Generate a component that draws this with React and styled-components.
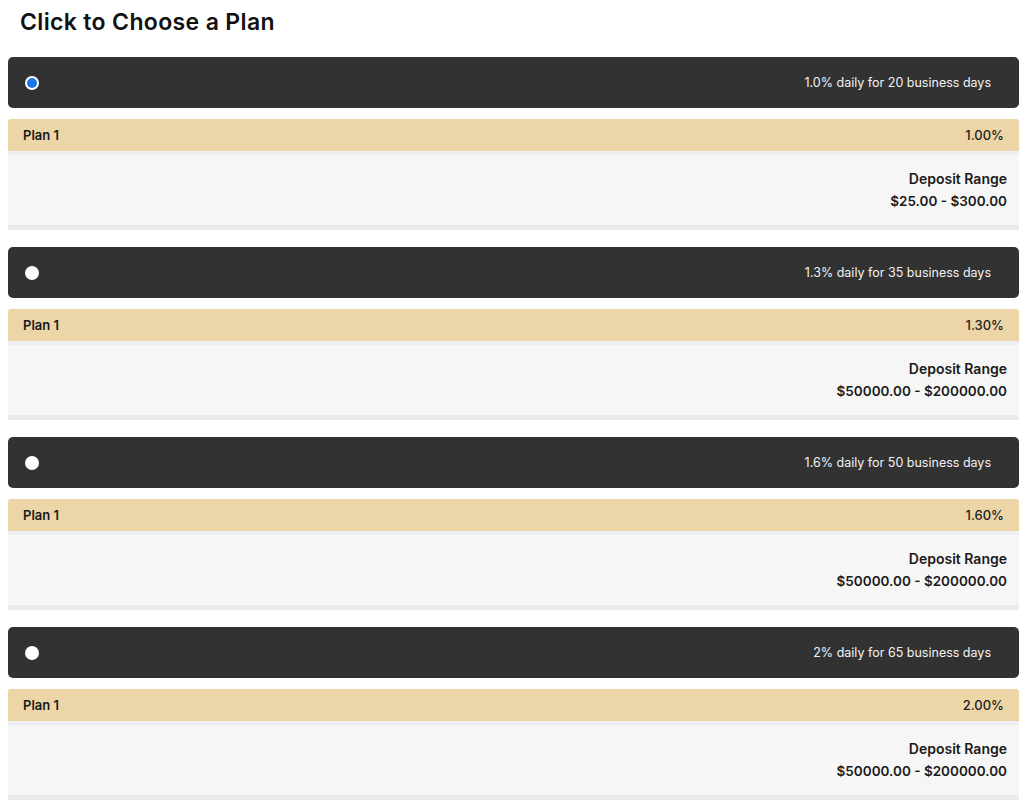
import React from "react";
import styled, { createGlobalStyle } from "styled-components";

const Global = createGlobalStyle`
  html, body { margin: 0; padding: 0; background: #ffffff; }
  body { font-family: "Inter", "Noto Sans", sans-serif; color: #111; }
`;

const Page = styled.div`
  padding: 6px 5px 0 8px;
  display: flex;
  flex-direction: column;
`;

const Title = styled.h2`
  margin: 0 0 18px 12px;
  font-size: 23px;
  line-height: 33px;
  font-weight: 600;
  color: #111;
  letter-spacing: 0.35px;
`;

const PlanList = styled.div`
  display: flex;
  flex-direction: column;
  gap: 17px;
`;

const Plan = styled.div`
  display: flex;
  flex-direction: column;
`;

const Header = styled.label`
  height: 51px;
  background: #323232;
  border-radius: 5px;
  display: flex;
  align-items: center;
  justify-content: space-between;
  padding: 0 28px 0 17px;
  margin-bottom: 11px;
  cursor: pointer;
`;

const Radio = styled.span`
  width: 14px;
  height: 14px;
  border-radius: 50%;
  background: ${(p) => (p.$checked ? "#1a73e8" : "#ffffff")};
  border: ${(p) => (p.$checked ? "2.5px solid #ffffff" : "0")};
  box-sizing: border-box;
  flex: none;
`;

const HeaderText = styled.span`
  color: #f2f2f2;
  font-size: 12.5px;
  font-weight: 400;
`;

const Bar = styled.div`
  height: 32px;
  background: #ecd6a7;
  border-radius: 3px 3px 0 0;
  display: flex;
  align-items: center;
  justify-content: space-between;
  padding: 0 15px 0 15px;
  font-size: 13px;
  font-weight: 600;
  color: #1a1a1a;
`;

const Rate = styled.span`
  font-weight: 500;
  color: #222;
`;

const Body = styled.div`
  background: #f6f6f6;
  border-top: 4px solid #efeff3;
  border-bottom: 5px solid #ebebeb;
  padding: 15px 12px 15px;
  display: flex;
  flex-direction: column;
  align-items: flex-end;
  gap: 4px;
`;

const Label = styled.div`
  font-size: 14px;
  font-weight: 600;
  line-height: 18px;
  color: #1a1a1a;
`;

const Range = styled.div`
  font-size: 13.5px;
  font-weight: 600;
  line-height: 18px;
  color: #1a1a1a;
`;

const plans = [
  { text: "1.0% daily for 20 business days", rate: "1.00%", range: "$25.00 - $300.00", checked: true },
  { text: "1.3% daily for 35 business days", rate: "1.30%", range: "$50000.00 - $200000.00" },
  { text: "1.6% daily for 50 business days", rate: "1.60%", range: "$50000.00 - $200000.00" },
  { text: "2% daily for 65 business days", rate: "2.00%", range: "$50000.00 - $200000.00" },
];

export default function App() {
  return (
    <>
      <Global />
      <Page>
        <Title>Click to Choose a Plan</Title>
        <PlanList>
          {plans.map((p, i) => (
            <Plan key={i}>
              <Header>
                <Radio $checked={p.checked} />
                <HeaderText>{p.text}</HeaderText>
              </Header>
              <Bar>
                <span>Plan 1</span>
                <Rate>{p.rate}</Rate>
              </Bar>
              <Body>
                <Label>Deposit Range</Label>
                <Range>{p.range}</Range>
              </Body>
            </Plan>
          ))}
        </PlanList>
      </Page>
    </>
  );
}
